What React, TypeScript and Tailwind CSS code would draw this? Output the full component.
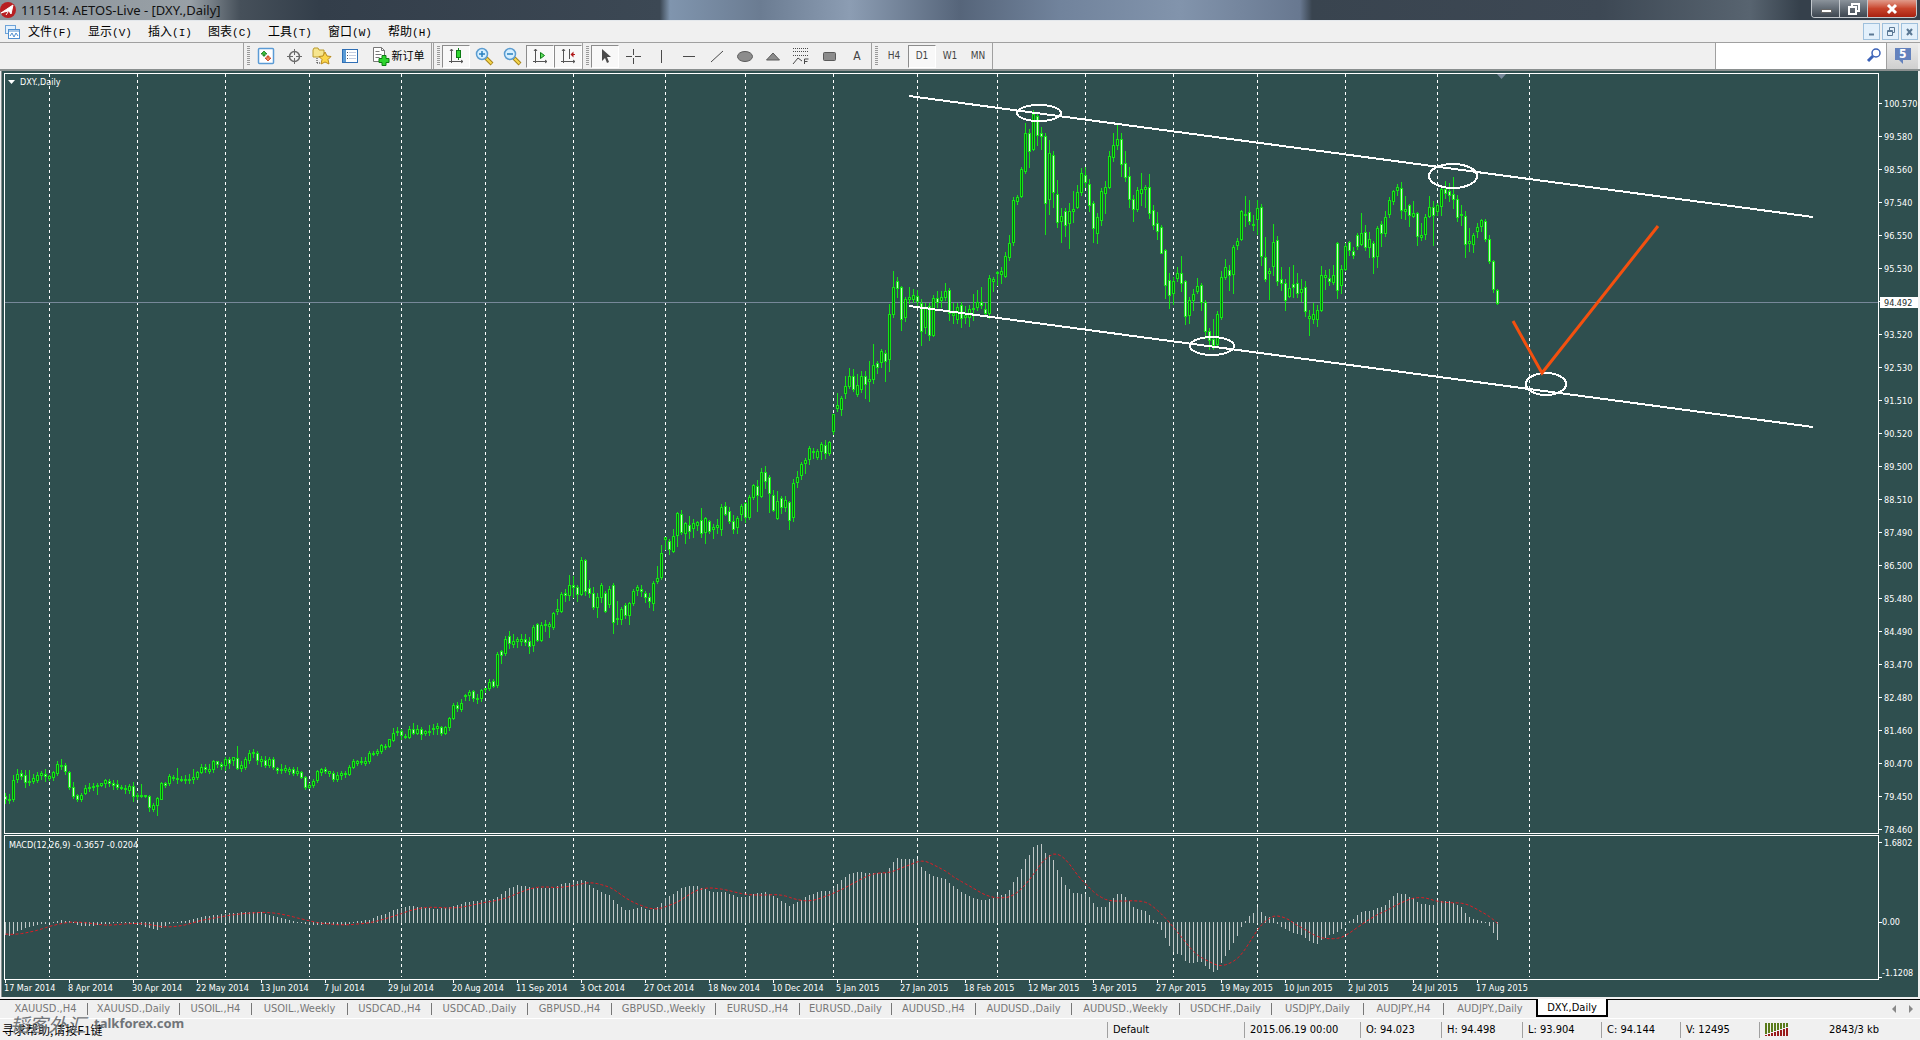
import React from 'react';
import { clsx } from 'clsx';

// [high, body top, body bottom, low, falling?] in chart units, one bar every 4 units
const candles: number[][] = [
  [793,796,799,803,1],[794,799,800,803],[775,780,799,801],[769,774,779,782],[770,773,776,779,1],[770,775,782,787,1],[770,781,782,785],[774,778,781,783],
  [772,775,780,782],[771,773,775,779],[769,774,776,781,1],[775,776,778,780],[771,772,777,780],[761,764,773,775],[759,765,766,769],[763,765,771,774,1],
  [771,772,787,789,1],[782,787,796,798,1],[794,795,799,801,1],[793,795,799,801],[785,788,793,794],[783,787,788,791],[783,786,787,790],[783,785,786,794],
  [783,783,785,786],[779,780,783,787],[779,781,783,786,1],[780,783,785,789,1],[780,784,787,789,1],[785,787,788,789],[785,788,789,793],[784,786,790,793],
  [782,786,796,801,1],[793,795,796,799],[784,795,796,797],[795,795,796,797],[795,796,807,811,1],[803,805,809,811],[797,798,805,815],[782,783,799,799],
  [782,783,785,787,1],[774,776,783,785],[775,777,778,780],[768,778,779,783],[776,779,780,781],[775,779,780,783],[774,779,780,783],[769,777,779,783],
  [771,772,777,779],[764,767,772,773],[764,767,769,772,1],[764,769,771,773],[760,761,769,772],[761,761,764,767,1],[762,764,766,769,1],[757,759,765,770],
  [757,759,763,768,1],[757,757,760,765],[746,758,768,769,1],[761,765,768,771],[757,759,767,769],[750,753,760,763],[749,752,753,757],[751,753,760,764,1],
  [756,759,761,766],[756,760,765,767,1],[757,759,765,767],[757,759,767,769,1],[767,768,770,773,1],[764,769,770,773],[765,768,770,772],[767,769,771,774],
  [767,769,773,775,1],[767,771,773,775],[771,772,777,778,1],[776,777,787,789,1],[783,785,787,788],[779,781,785,787],[770,771,780,782],[768,769,772,775],
  [767,769,771,773,1],[771,771,773,776],[771,773,779,781,1],[772,775,779,781],[771,773,775,779],[771,773,774,777],[765,767,774,775],[759,761,767,768],
  [760,761,763,765],[757,761,762,764],[757,761,763,765],[751,753,761,763],[751,753,754,755],[749,751,753,755],[744,745,751,753],[744,746,747,749],
  [739,739,746,747],[728,733,740,741],[727,731,732,735],[729,731,735,739,1],[734,736,737,738],[726,729,737,738],[723,729,733,734,1],[725,729,733,734],
  [727,729,734,739,1],[730,731,733,735],[725,731,732,735],[724,728,729,734],[723,726,728,734],[726,727,733,735,1],[726,727,733,734],[717,718,727,730],
  [703,705,718,719],[702,705,708,711,1],[699,703,709,711],[694,695,696,700],[690,692,695,700],[690,691,698,701,1],[694,698,699,703],[689,690,698,701],
  [688,688,689,692],[679,682,688,690],[679,681,686,687,1],[652,654,685,687],[650,651,655,663,1],[636,639,653,655],[631,636,643,648,1],[634,641,644,647],
  [637,639,641,647],[634,639,641,645],[634,639,642,645,1],[637,641,646,653,1],[625,627,645,651],[623,624,640,641,1],[622,625,640,641],[620,624,625,631],
  [622,624,626,637],[612,613,627,629],[599,609,611,614],[592,594,611,612],[589,593,595,601,1],[575,585,595,600],[576,585,587,597,1],[585,587,594,601,1],
  [557,560,594,595],[559,560,591,595,1],[580,588,593,597,1],[587,593,607,609,1],[593,597,607,617],[583,585,597,602],[591,593,611,612,1],[586,589,604,607],
  [583,585,622,633,1],[601,618,619,624],[607,609,619,624],[603,605,615,618,1],[602,603,615,624],[589,591,603,605],[585,587,590,595],[585,589,591,596,1],
  [591,593,597,602,1],[593,597,601,607,1],[581,583,603,610],[566,578,581,583],[545,553,577,579],[537,537,539,549],[539,541,549,554,1],[529,536,551,552],
  [512,513,535,546],[510,514,532,534,1],[522,523,533,543],[516,525,531,538,1],[519,523,528,537],[521,522,525,530],[508,520,533,537,1],[517,518,532,543],
  [520,521,531,533,1],[524,527,529,538],[519,525,527,533],[504,507,529,535],[502,506,514,515,1],[507,511,521,523,1],[515,521,529,533,1],[516,518,527,533],
  [504,506,514,520],[502,503,517,522,1],[495,497,517,519],[484,485,497,499],[480,486,495,511,1],[468,472,496,497],[466,472,481,488,1],[475,477,493,512,1],
  [490,495,510,511,1],[491,501,518,519],[496,498,507,513,1],[496,500,507,511],[501,502,520,529,1],[479,483,517,521],[471,477,482,487],[462,464,475,479],
  [458,460,463,473],[446,448,459,464],[448,451,452,458],[449,451,457,459],[442,444,451,459],[440,445,453,458,1],[441,442,453,455],[414,414,431,434],
  [393,405,408,411],[396,398,409,415],[376,386,393,398],[368,376,386,388],[369,376,389,391,1],[374,385,394,396],[371,376,389,392],[371,376,384,398,1],
  [361,379,381,401],[344,365,379,383],[361,363,367,373,1],[349,351,362,367],[350,353,361,381,1],[304,314,359,371],[271,287,314,317],[277,281,288,297,1],
  [286,287,319,330,1],[297,299,317,321],[287,297,299,303],[289,295,299,302],[290,296,301,305,1],[299,303,331,345,1],[303,307,327,333],[303,306,335,340,1],
  [295,298,335,336],[291,298,302,307,1],[291,297,300,307],[283,291,297,300],[288,290,313,320,1],[303,313,315,323],[303,307,319,323],[302,305,318,327,1],
  [306,315,317,323],[305,309,317,326],[294,308,309,320],[290,302,307,310],[287,302,305,308,1],[303,309,313,315,1],[275,278,313,318],[277,279,281,291],
  [271,272,273,285],[267,271,274,283],[252,256,276,277],[235,243,257,260],[197,200,242,245],[195,197,201,204],[167,169,196,197],[123,133,171,173],
  [129,133,151,167,1],[110,114,149,150],[112,116,135,145,1],[127,133,136,149,1],[133,136,203,234,1],[140,153,199,214],[151,155,192,207,1],[180,194,222,227,1],
  [208,216,221,242],[208,211,225,236,1],[203,211,223,248],[191,209,211,222],[185,192,207,208],[168,173,192,195],[167,175,182,187,1],[179,184,205,211,1],
  [201,203,228,242,1],[213,217,233,243],[188,191,220,225],[181,187,193,213],[151,156,187,188],[133,145,157,161],[123,139,145,149],[133,139,164,176,1],
  [151,163,177,181,1],[167,176,199,207,1],[195,199,209,221,1],[187,190,209,211],[173,189,193,205],[185,187,189,207],[174,187,213,218,1],[205,210,225,229,1],
  [212,223,231,239,1],[225,227,253,253,1],[249,250,285,298,1],[273,280,295,308,1],[277,281,293,304],[267,273,278,281],[256,273,283,291,1],[280,281,316,324,1],
  [297,300,315,323],[289,294,300,310],[278,286,291,293],[283,285,302,310,1],[300,302,331,338,1],[328,331,340,349,1],[319,339,345,349,1],[311,314,344,345],
  [271,277,317,319],[259,267,277,279],[265,270,275,290,1],[245,247,274,293],[238,241,245,249],[210,211,239,240],[196,214,215,226],[200,212,221,224,1],
  [215,224,225,230],[200,208,219,234],[204,207,256,265,1],[237,257,279,281,1],[268,271,273,299],[224,242,266,275],[236,240,281,285,1],[267,279,283,290,1],
  [279,283,300,310,1],[267,288,296,297],[265,284,287,297,1],[273,283,293,297,1],[279,289,292,301],[281,287,311,316,1],[310,316,318,335],[303,314,319,323],
  [305,310,319,326],[266,275,310,311],[270,275,277,289],[269,278,281,285,1],[265,275,282,284],[242,243,290,298,1],[265,269,285,293],[243,246,269,270],
  [241,242,250,255,1],[247,251,255,258,1],[233,235,246,249,1],[213,233,244,245],[225,232,247,250,1],[232,239,247,257],[241,243,257,273,1],[226,228,256,267],
  [221,224,233,246,1],[211,217,233,236],[197,200,214,217],[190,191,201,204],[184,187,190,195],[182,188,210,218,1],[196,209,211,219],[204,205,215,226,1],
  [201,213,216,217],[212,213,236,245,1],[223,235,237,240],[214,217,234,239],[196,207,216,217],[201,207,215,245,1],[203,205,211,215],[186,189,206,215],
  [181,189,193,198,1],[183,191,195,201,1],[177,194,199,208,1],[195,199,217,221,1],[205,214,215,225],[211,216,244,257,1],[228,241,243,251],[233,235,244,252],
  [223,227,231,237],[219,220,226,231],[219,221,239,241,1],[235,239,261,263,1],[260,261,289,292,1],[289,290,303,304,1],
];

// [bar index, level] turning points of the MACD histogram
const macdPoints: number[][] = [
  [0,935],[1,936],[2,934],[3,931],[5,928],[8,925],[12,922],[14,920],[16,921],[18,925],[20,926],[22,926],[24,924],[28,923],[33,924],[36,928],[38,930],
  [40,926],[42,922],[46,920],[48,918],[50,916],[54,914],[57,913],[60,912],[64,912],[66,915],[68,917],[70,919],[72,921],[74,922],[76,925],[78,925],
  [80,924],[84,925],[86,924],[88,921],[91,920],[93,916],[95,914],[97,910],[99,908],[101,906],[104,907],[108,909],[111,907],[114,904],[115,902],
  [120,900],[122,899],[124,894],[126,888],[128,885],[130,886],[132,888],[137,888],[139,884],[142,882],[144,880],[145,881],[147,888],[149,892],[151,895],
  [153,904],[155,910],[157,909],[159,907],[161,910],[163,907],[165,898],[167,894],[169,888],[171,886],[173,886],[174,888],[177,892],[180,892],[183,897],
  [185,897],[187,894],[190,892],[192,896],[195,903],[196,906],[198,902],[201,895],[204,891],[206,891],[207,888],[209,880],[211,874],[213,872],[216,873],
  [220,873],[221,868],[222,862],[223,858],[224,859],[228,859],[229,867],[231,874],[233,877],[235,879],[237,886],[239,892],[241,896],[243,899],[245,900],
  [247,898],[248,895],[250,894],[251,890],[252,882],[253,877],[254,869],[255,859],[256,855],[257,847],[258,845],[259,844],[260,853],[261,855],[262,860],
  [263,870],[264,877],[265,885],[266,889],[267,893],[270,894],[271,897],[272,903],[273,907],[275,907],[276,902],[277,898],[278,894],[279,894],[280,897],
  [281,901],[282,907],[283,909],[285,911],[286,915],[287,920],[288,924],[289,930],[290,938],[291,946],[292,952],[294,955],[295,961],[296,963],[299,962],
  [300,966],[301,969],[302,972],[303,970],[304,963],[305,956],[306,950],[307,943],[308,936],[309,927],[310,921],[311,916],[312,913],[313,907],[314,912],
  [315,916],[317,918],[318,924],[320,929],[322,933],[324,935],[326,941],[328,944],[329,940],[331,935],[333,932],[334,929],[335,924],[336,921],[337,919],
  [338,915],[339,912],[342,910],[343,908],[345,905],[346,900],[347,896],[348,893],[350,894],[351,897],[352,898],[353,902],[354,904],[357,905],[358,901],
  [361,901],[362,903],[363,905],[364,907],[365,913],[366,917],[367,919],[369,921],[370,922],[371,926],[372,933],[373,940],
];

const ZERO = 922;
const barX = (i: number) => 5 + i * 4;

const macd = candles.map((_, i) => {
  const n = Math.max(1, macdPoints.findIndex(([at]) => at >= i));
  const [x0, y0] = macdPoints[n - 1];
  const [x1, y1] = macdPoints[n];
  return Math.round(y0 + ((y1 - y0) * (i - x0)) / (x1 - x0));
});

// 9 period simple average
const signal = macd.map((_, i) => {
  let sum = 0;
  for (let k = i - 8; k <= i; k++) sum += k < 0 ? 934 : macd[k];
  return sum / 9;
});

const box = (x: number, y: number, w: number, h: number) => `M${x} ${y}h${w}v${h}h${-w}z`;

const outlinePath = candles
  .map(([h, t, b, l], i) => box(barX(i), h, 1, l - h + 1) + box(barX(i) - 1, t, 3, b - t + 1))
  .join('');
const bodyPath = (falling: boolean) =>
  candles
    .map(([, t, b, , f], i) => (!!f === falling && b - t > 1 ? box(barX(i), t + 1, 1, b - t - 1) : ''))
    .join('');
const macdPath = macd
  .map((y, i) => (y <= ZERO ? box(barX(i), y, 1, ZERO - y + 1) : box(barX(i), ZERO, 1, y - ZERO)))
  .join('');
const signalPath = signal.map((y, i) => `${i ? 'L' : 'M'}${barX(i) + 0.5} ${y.toFixed(1)}`).join('');

const gridX = [49, 137, 225, 309, 401, 485, 573, 665, 745, 833, 917, 997, 1085, 1173, 1257, 1345, 1437, 1529];

const prices = [
  '100.570', '99.580', '98.560', '97.540', '96.550', '95.530', '', '93.520', '92.530', '91.510', '90.520', '89.500',
  '88.510', '87.490', '86.500', '85.480', '84.490', '83.470', '82.480', '81.460', '80.470', '79.450', '78.460',
];

const dates = [
  '17 Mar 2014', '8 Apr 2014', '30 Apr 2014', '22 May 2014', '13 Jun 2014', '7 Jul 2014', '29 Jul 2014', '20 Aug 2014',
  '11 Sep 2014', '3 Oct 2014', '27 Oct 2014', '18 Nov 2014', '10 Dec 2014', '5 Jan 2015', '27 Jan 2015', '18 Feb 2015',
  '12 Mar 2015', '3 Apr 2015', '27 Apr 2015', '19 May 2015', '10 Jun 2015', '2 Jul 2015', '24 Jul 2015', '17 Aug 2015',
];

const Chart: React.FC = () => (
  <svg
    viewBox="0 71 1920 926"
    className="block h-auto w-full bg-[#2f4f4f] font-['DejaVu_Sans_Condensed','DejaVu_Sans',sans-serif] text-[9px]"
    role="img"
    aria-label="DXY daily chart"
  >
    <rect x="0" y="71" width="1" height="926" fill="#f0f0f0" />
    <rect x="1" y="71" width="1" height="926" fill="#8a8f8f" />
    <rect x="1918" y="71" width="2" height="926" fill="#f0f0f0" />

    <g stroke="#fff" strokeDasharray="3 3" shapeRendering="crispEdges">
      {gridX.map((x) => (
        <path key={x} d={`M${x + 0.5} 74V832M${x + 0.5} 838V977`} />
      ))}
    </g>

    <g shapeRendering="crispEdges">
      <path d="M4 302.5H1879" stroke="#778899" />
      <path d={outlinePath} fill="#14e614" />
      <path d={bodyPath(false)} fill="#086a14" />
      <path d={bodyPath(true)} fill="#c8fcc8" />
      <path d={macdPath} fill="#c0c8c8" />
    </g>
    <path d={signalPath} fill="none" stroke="#e01c24" strokeDasharray="3 2" />

    <g fill="none" stroke="#fff" strokeWidth="2" shapeRendering="crispEdges">
      <path d="M909 96L1813 217M909 306L1813 427" />
      <ellipse cx="1039" cy="113" rx="22" ry="8" />
      <ellipse cx="1212" cy="346" rx="22" ry="9" />
      <ellipse cx="1453" cy="176" rx="24" ry="12" />
      <ellipse cx="1546" cy="384" rx="20" ry="11" />
    </g>
    <path d="M1513 321L1542 373L1658 226" fill="none" stroke="#f4500f" strokeWidth="3" />

    <g fill="none" stroke="#fff" shapeRendering="crispEdges">
      <path d="M4.5 833V73.5H1878.5V833.5H4M4.5 979V835.5H1878.5V979.5H4" />
      {prices.map((p, i) => (
        <path key={i} d={`M1879 ${103.5 + i * 33}h3`} />
      ))}
      <path d="M1879 842.5h3M1879 922.5h3M1879 977.5h3" />
      {dates.map((d, i) => (
        <path key={d} d={`M${5.5 + i * 64} 980v3`} />
      ))}
    </g>

    <path d="M1497 74h9l-4.500 5z" fill="#778899" />
    <path d="M8 80h7l-3.500 4z" fill="#fff" />

    <g fill="#fff">
      <text x="20" y="85">DXY.,Daily</text>
      <text x="9" y="848">MACD(12,26,9) -0.3657 -0.0204</text>
      {prices.map((p, i) => (
        <text key={i} x="1884" y={107 + i * 33}>{p}</text>
      ))}
      <text x="1884" y="846">1.6802</text>
      <text x="1882" y="925">0.00</text>
      <text x="1882" y="976">-1.1208</text>
      {dates.map((d, i) => (
        <text key={d} x={4 + i * 64} y="991">{d}</text>
      ))}
    </g>
    <rect x="1880" y="297" width="38" height="11" fill="#fff" />
    <text x="1884" y="306" fill="#1c2c2c">94.492</text>
  </svg>
);

const icons: Record<string, React.ReactNode> = {
  watch: (
    <>
      <rect x="2.500" y="2.500" width="15" height="15" rx="1" fill="#fff" stroke="#5b9bd5" strokeWidth="1.500" />
      <path d="M8 5l3 3H9v2H7V8H5z" fill="#3fc03f" stroke="#1a7a1a" strokeWidth="0.800" />
      <path d="M12 15l-3-3h2v-2h2v2h2z" fill="#f08a5a" stroke="#c83a18" strokeWidth="0.800" />
    </>
  ),
  crosshair: (
    <g fill="none" stroke="#6a6a6a">
      <circle cx="10.500" cy="10.500" r="5" strokeWidth="1.500" />
      <path d="M10.500 3v6M10.500 12v6M3 10.500h6M12 10.500h6" />
    </g>
  ),
  favourites: (
    <>
      <path d="M1 4l1-2h4l1 2h5v7H1z" fill="#f6e58e" stroke="#b99a2c" />
      <path d="M5 12v6M5 17h4" stroke="#333" strokeDasharray="1 1" fill="none" />
      <path d="M13 6l2 4 4 .5-3 3 1 4.500-4-2-4 2 1-4.500-3-3 4-.5z" fill="#fbd64a" stroke="#b98a1c" />
    </>
  ),
  terminal: (
    <>
      <rect x="2.500" y="3.500" width="15" height="13" fill="#fff" stroke="#2f6fb5" />
      <path d="M3 4h3v12H3z" fill="#5b9bd5" />
      <path d="M9 6.500h7M9 9.500h7M9 12.500h7" stroke="#c4cce0" />
      <path d="M7 6.500h1M7 9.500h1M7 12.500h1" stroke="#505060" />
    </>
  ),
  order: (
    <>
      <path d="M2.500 1.500h8l3 3v11h-11z" fill="#fff" stroke="#777" />
      <path d="M10.500 1.500v3h3M4.500 5.500h4M4.500 8.500h6M4.500 11.500h4" stroke="#777" fill="none" />
      <path d="M11 9.500h4v3h3v4h-3v3h-4v-3H8v-4h3z" fill="#2ed52e" stroke="#0c7c14" />
    </>
  ),
  candles: (
    <>
      <path d="M5.500 3v14M3 15.500h14M4 5l1.500-2L7 5M15 14l2 1.500-2 1.500" stroke="#555" fill="none" />
      <path d="M12.500 2v12" stroke="#0c7c14" />
      <rect x="10.500" y="4.500" width="4" height="7" fill="#2ed52e" stroke="#0c7c14" />
    </>
  ),
  zoomIn: (
    <>
      <path d="M12 12l6 6" stroke="#a8841a" strokeWidth="4" />
      <path d="M12.500 12.500l5 5" stroke="#f7d84e" strokeWidth="2" />
      <circle cx="8" cy="8" r="5.500" fill="#d6efff" stroke="#5b9cd0" strokeWidth="1.500" />
      <path d="M5 8h6M8 5v6" stroke="#2a80be" strokeWidth="1.500" />
    </>
  ),
  zoomOut: (
    <>
      <path d="M12 12l6 6" stroke="#a8841a" strokeWidth="4" />
      <path d="M12.500 12.500l5 5" stroke="#f7d84e" strokeWidth="2" />
      <circle cx="8" cy="8" r="5.500" fill="#d6efff" stroke="#5b9cd0" strokeWidth="1.500" />
      <path d="M5 8h6" stroke="#2a80be" strokeWidth="1.500" />
    </>
  ),
  scroll: (
    <>
      <path d="M5.500 3v14M3 15.500h14M4 5l1.500-2L7 5M15 14l2 1.500-2 1.500" stroke="#555" fill="none" />
      <path d="M10.500 6.500v6l4-3z" fill="#5fe05f" stroke="#0c7c14" />
    </>
  ),
  shift: (
    <>
      <path d="M5.500 3v14M3 15.500h14M4 5l1.500-2L7 5M15 14l2 1.500-2 1.500M11.500 3v10" stroke="#555" fill="none" />
      <path d="M17 8.500h-4" stroke="#b01818" />
      <path d="M12.500 8.500l3-3v6z" fill="#b01818" />
    </>
  ),
  cursor: <path d="M7 3v12l3-3 2 5 2-1-2-5h4z" fill="#4a4a4a" />,
  cross: <path d="M10.500 3v6M10.500 12v6M3 10.500h6M12 10.500h6" stroke="#4a4a4a" />,
  vline: <path d="M10.500 4v13" stroke="#4a4a4a" />,
  hline: <path d="M4 10.500h12" stroke="#4a4a4a" />,
  trend: <path d="M4 16L16 5" stroke="#4a4a4a" />,
  ellipse: <ellipse cx="10" cy="10.500" rx="7.500" ry="5" fill="#8c8c8c" stroke="#5a5a5a" />,
  triangle: <path d="M10 7l6.500 7h-13z" fill="#8c8c8c" stroke="#5a5a5a" />,
  fibo: (
    <>
      <path d="M2 2.500h15M2 5.500h15M2 9.500h15" stroke="#4a4a4a" strokeDasharray="1 1" />
      <path d="M2 18l5-6 4 3M13.500 18v-5h4M13.500 15.500h3" stroke="#4a4a4a" fill="none" />
    </>
  ),
  rect: <rect x="4.500" y="6.500" width="12" height="8" rx="1" fill="#8c8c8c" stroke="#5a5a5a" />,
};

interface ToolProps {
  name: string;
  icon?: string;
  pressed?: boolean;
  wide?: boolean;
}

const Tool: React.FC<ToolProps> = ({ name, icon, pressed, wide }) => (
  <button
    aria-label={name}
    className={clsx(
      'flex h-[23px] items-center justify-center border text-[10px] text-[#444]',
      wide ? 'w-[67px] gap-px' : 'w-7',
      pressed ? 'border-t-[#8c8c8c] border-r-white border-b-white border-l-[#8c8c8c] bg-[#f8f8f8]' : 'border-transparent'
    )}
  >
    {icon ? <svg width="20" height="20" className="shrink-0">{icons[icon]}</svg> : name}
    {wide && <span className="text-[11px] whitespace-nowrap text-black">{name}</span>}
  </button>
);

const Grip = () => (
  <div className="flex w-2 justify-center">
    <div className="h-5 w-[3px] bg-[repeating-linear-gradient(to_bottom,#9a9a9a_0_1px,#f0f0f0_1px_2px)]" />
  </div>
);

const menus = [['文件', 'F'], ['显示', 'V'], ['插入', 'I'], ['图表', 'C'], ['工具', 'T'], ['窗口', 'W'], ['帮助', 'H']];

const drawTools = ['cross', 'vline', 'hline', 'trend', 'ellipse', 'triangle', 'fibo', 'rect'];

const tabs = [
  ['XAUUSD.,H4', 'w-[84px]'], ['XAUUSD.,Daily', 'w-[92px]'], ['USOIL.,H4', 'w-[72px]'], ['USOIL.,Weekly', 'w-[96px]'],
  ['USDCAD.,H4', 'w-[84px]'], ['USDCAD.,Daily', 'w-[96px]'], ['GBPUSD.,H4', 'w-[84px]'], ['GBPUSD.,Weekly', 'w-[104px]'],
  ['EURUSD.,H4', 'w-[84px]'], ['EURUSD.,Daily', 'w-[92px]'], ['AUDUSD.,H4', 'w-[84px]'], ['AUDUSD.,Daily', 'w-[96px]'],
  ['AUDUSD.,Weekly', 'w-[108px]'], ['USDCHF.,Daily', 'w-[92px]'], ['USDJPY.,Daily', 'w-[92px]'], ['AUDJPY.,H4', 'w-[80px]'],
  ['AUDJPY.,Daily', 'w-[92px]'],
];

const status = [
  ['Default', 'w-[137px]'], ['2015.06.19 00:00', 'w-[116px]'], ['O: 94.023', 'w-[81px]'], ['H: 94.498', 'w-[81px]'],
  ['L: 93.904', 'w-[79px]'], ['C: 94.144', 'w-[79px]'], ['V: 12495', 'w-[79px]'],
];

const App: React.FC = () => {
  return (
    <div className="w-full overflow-hidden bg-[#f0f0f0] font-['DejaVu_Sans_Condensed','DejaVu_Sans','Noto_Sans_CJK_SC',sans-serif] text-[11px] leading-none text-black">
      <header className="flex h-[21px] justify-between border-b border-[#e4e8ec] bg-[linear-gradient(to_right,#8d959c_0px,#98a0a6_190px,#46505a_240px,#333e4a_320px,#3c4854_660px,#8095ae_670px,#6b7c92_760px,#8c9db3_850px,#56657a_960px,#71839c_1060px,#8294ac_1180px,#687890_1300px,#39444f_1312px,#3d4854_1600px,#586470_1750px,#35404b_1800px)]">
        <div className="flex items-center gap-1">
          <svg width="17" height="20">
            <circle cx="8" cy="10" r="8" fill="#b81f22" />
            <path d="M1 13L13 5l-2 9-2-3-5 1zM6 15l2-3" fill="#fff" stroke="#fff" />
          </svg>
          <h1 className="font-['Noto_Sans',sans-serif] text-[13px] text-[#111]">111514: AETOS-Live - [DXY.,Daily]</h1>
        </div>
        <div className="mr-[3px] flex h-[18px] overflow-hidden rounded-b border border-t-0 border-[#c3c8cd]">
          <button aria-label="Minimize" className="flex w-7 items-center justify-center border-r border-[#c3c8cd] bg-linear-to-b from-[#8b939b] to-[#3d4650]">
            <svg width="12" height="12"><rect x="1.500" y="6.500" width="10" height="3" fill="#fff" stroke="#666" /></svg>
          </button>
          <button aria-label="Restore" className="flex w-7 items-center justify-center border-r border-[#c3c8cd] bg-linear-to-b from-[#8b939b] to-[#3d4650]">
            <svg width="12" height="12" fill="none" stroke="#fff" strokeWidth="2"><path d="M4 3V1h7v7H9M1 4h7v7H1z" /></svg>
          </button>
          <button aria-label="Close" className="flex w-12 items-center justify-center bg-linear-to-b from-[#e09a8a] via-[#c8442c] to-[#a82010]">
            <svg width="12" height="12"><path d="M2 2l8 8M10 2l-8 8" stroke="#fff" strokeWidth="3" /></svg>
          </button>
        </div>
      </header>

      <nav className="flex h-[22px] items-center border-b border-[#a0a0a0] pl-[5px]">
        <svg width="15" height="14" className="mr-2 shrink-0">
          <rect x="0.500" y="0.500" width="10" height="8" fill="#e4f1fd" stroke="#6ea3d8" />
          <rect x="3.500" y="4.500" width="11" height="9" fill="#fff" stroke="#4f8fd0" />
          <path d="M4 6h10" stroke="#4f8fd0" />
          <path d="M5 11l2-3 2 4 2-4 2 3" fill="none" stroke="#4f8fd0" />
        </svg>
        {menus.map(([label, key]) => (
          <button key={key} className="w-[60px] text-left font-['Noto_Sans_CJK_SC',sans-serif] text-[12px] whitespace-nowrap">
            {label}
            <span className="font-['Liberation_Mono',monospace] text-[11px]">({key})</span>
          </button>
        ))}
        <div className="mr-[2px] ml-auto flex gap-[2px]">
          <button aria-label="Minimize chart" className="h-[17px] w-[17px] border border-[#9fc0dc] bg-[#e3f0fb]">
            <svg width="15" height="15"><path d="M5 10.500h5" stroke="#5b7894" strokeWidth="2" /></svg>
          </button>
          <button aria-label="Restore chart" className="h-[17px] w-[17px] border border-[#9fc0dc] bg-[#e3f0fb]">
            <svg width="15" height="15" fill="none" stroke="#5b7894"><path d="M6.500 6V3.500h5v5H10M4.500 6.500h5v5h-5zM4 7.500h6" /></svg>
          </button>
          <button aria-label="Close chart" className="h-[17px] w-[17px] border border-[#9fc0dc] bg-[#e3f0fb]">
            <svg width="15" height="15"><path d="M5 5l5 6M10 5l-5 6" stroke="#5b7894" strokeWidth="2" /></svg>
          </button>
        </div>
      </nav>

      <div className="flex h-7 border-b-2 border-[#8a8f8f] pl-[243px]">
        <div className="flex items-center border-x border-[#a0a0a0]">
          <Grip />
          <Tool name="Market Watch" icon="watch" />
          <Tool name="Data Window" icon="crosshair" />
          <Tool name="Navigator" icon="favourites" />
          <Tool name="Terminal" icon="terminal" />
          <Tool name="新订单" icon="order" wide />
        </div>
        <div className="ml-px flex items-center border-x border-[#a0a0a0]">
          <Grip />
          <Tool name="Candlesticks" icon="candles" pressed />
          <Tool name="Zoom In" icon="zoomIn" />
          <Tool name="Zoom Out" icon="zoomOut" />
          <Tool name="Auto Scroll" icon="scroll" pressed />
          <Tool name="Chart Shift" icon="shift" pressed />
        </div>
        <div className="flex items-center border-r border-[#a0a0a0]">
          <Grip />
          <Tool name="Cursor" icon="cursor" pressed />
          {drawTools.map((t) => (
            <Tool key={t} name={t} icon={t} />
          ))}
          <button className="h-[23px] w-7 text-[12px] text-[#444]">A</button>
        </div>
        <div className="flex items-center border-r border-[#a0a0a0]">
          <Grip />
          <Tool name="H4" />
          <Tool name="D1" pressed />
          <Tool name="W1" />
          <Tool name="MN" />
        </div>
        <div className="mr-[2px] ml-auto flex">
          <label className="flex w-[171px] items-center border-l border-[#a0a0a0] bg-white pr-1">
            <input aria-label="Search" className="min-w-0 flex-1 px-1 outline-none" />
            <svg width="16" height="16" fill="none">
              <circle cx="10" cy="5" r="4" stroke="#3b62b8" strokeWidth="1.500" />
              <path d="M7 8l-5 5" stroke="#3b62b8" strokeWidth="3" />
            </svg>
          </label>
          <button aria-label="Messages" className="flex w-8 items-center justify-center border-l border-[#a0a0a0] bg-linear-to-b from-[#ececec] to-[#cfcfcf]">
            <svg width="18" height="18">
              <path d="M1 1h16v12H9v4l-4-4H1z" fill="#6482bd" />
              <text x="5" y="11" fill="#fff" className="text-[12px] font-bold">5</text>
            </svg>
          </button>
        </div>
      </div>

      <Chart />

      <div className="flex h-[22px] items-start border-b border-white pt-[2px]">
        <div className="flex h-[18px] flex-1 items-center border-t border-black pl-1 text-[#777]">
          {tabs.map(([label, width]) => (
            <button key={label} className={clsx('h-3 border-r border-[#777] text-center whitespace-nowrap last:border-r-0', width)}>
              {label}
            </button>
          ))}
        </div>
        <button className="h-[18px] w-[72px] border-2 border-t-0 border-black bg-white">DXY.,Daily</button>
        <div className="flex h-[18px] w-[312px] items-center justify-end gap-3 border-t border-black pr-[6px]">
          <button aria-label="Scroll left"><svg width="5" height="8"><path d="M4 0v8L0 4z" fill="#888" /></svg></button>
          <button aria-label="Scroll right"><svg width="5" height="8"><path d="M0 0v8l4-4z" fill="#888" /></svg></button>
        </div>
      </div>

      <footer className="relative flex h-[21px] items-center">
        <div className="flex-1 pl-[2px] font-['Noto_Sans_CJK_SC',sans-serif] text-[12px]">寻求帮助,请按F1键</div>
        {/* site mark lies over the tab strip and the help text */}
        <div className="pointer-events-none absolute -top-[5px] left-[10px] flex items-center gap-2 font-bold text-[#707478]">
          <span className="font-['Noto_Sans_CJK_SC',sans-serif] text-[19px] font-normal italic">韬客外汇</span>
          <span className="font-['Noto_Sans',sans-serif] text-[13px]">talkforex.com</span>
        </div>
        {status.map(([label, width]) => (
          <div key={label} className={clsx('flex h-4 items-center border-l border-[#a0a0a0] pl-[5px] whitespace-nowrap', width)}>
            {label}
          </div>
        ))}
        <div className="flex h-4 w-[161px] items-center gap-10 border-l border-[#a0a0a0] pl-[5px]">
          <svg width="24" height="13" shapeRendering="crispEdges">
            {[0, 1, 2, 3, 4, 5, 6, 7].map((n) => (
              <g key={n}>
                <rect x={n * 3} y="0" width="2" height={11 - n} fill="#5a7a1a" />
                <rect x={n * 3} y={12 - n} width="2" height={n + 1} fill="#9a1c1c" />
              </g>
            ))}
          </svg>
          <span className="whitespace-nowrap">2843/3 kb</span>
        </div>
      </footer>
    </div>
  );
};

export default App;
